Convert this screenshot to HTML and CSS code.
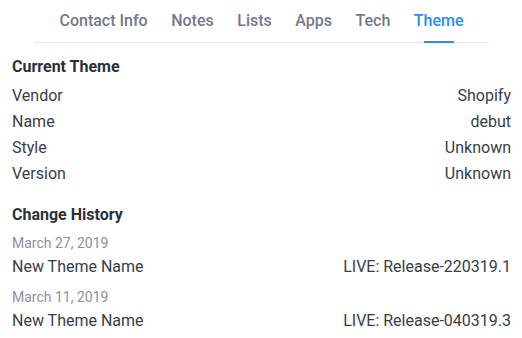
FILE: index.html
```html
<!DOCTYPE html>
<html lang="en">
<head>
  <meta charset="UTF-8">
  <meta name="viewport" content="width=device-width, initial-scale=1.0">
  <title>Store Theme</title>
  <link rel="stylesheet" href="styles.css">
</head>
<body>

  <div class="tabs">
    <a href="#" class="tab">Contact Info</a>
    <a href="#" class="tab">Notes</a>
    <a href="#" class="tab">Lists</a>
    <a href="#" class="tab">Apps</a>
    <a href="#" class="tab">Tech</a>
    <a href="#" class="tab active">Theme</a>
  </div>

  <!-- Current theme -->
  <div class="section">
    <h3>Current Theme</h3>
    <div class="row"><span>Vendor</span><span>Shopify</span></div>
    <div class="row"><span>Name</span><span>debut</span></div>
    <div class="row"><span>Style</span><span>Unknown</span></div>
    <div class="row"><span>Version</span><span>Unknown</span></div>
  </div>

  <!-- History -->
  <div class="section history">
    <h3>Change History</h3>
    <div class="entry">
      <div class="date">March 27, 2019</div>
      <div class="row"><span>New Theme Name</span><span>LIVE: Release-220319.1</span></div>
    </div>
    <div class="entry">
      <div class="date">March 11, 2019</div>
      <div class="row"><span>New Theme Name</span><span>LIVE: Release-040319.3</span></div>
    </div>
  </div>

</body>
</html>
```

FILE: styles.css
```css
body {
  font-family: Roboto, "Liberation Sans", Arial, sans-serif;
  background-color: #fff;
  color: #373e48;
  margin: 0;
  padding: 0;
}

.tabs {
  display: flex;
  justify-content: center;
  gap: 23.5px;
  margin: 0 33px 0 34px;
  border-bottom: 1px solid #e6e8eb;
}

.tab {
  position: relative;
  display: block;
  padding: 11px 0;
  font-size: 16px;
  font-weight: 500;
  line-height: 20px;
  color: #727a87;
  text-decoration: none;
}

.tab.active {
  color: #2b8ef0;
}

.tab.active::after {
  content: "";
  position: absolute;
  left: 50%;
  bottom: -1px;
  width: 30px;
  height: 2px;
  margin-left: -15px;
  background-color: #2b8ef0;
}

.section {
  padding: 0 11px 0 12px;
}

.section h3 {
  margin: 14px 0 6px;
  font-size: 16px;
  line-height: 20px;
  font-weight: bold;
  color: #2a313a;
}

.history h3 {
  margin: 18px 0 7px;
}

.row {
  display: flex;
  justify-content: space-between;
  font-size: 16px;
  line-height: 26px;
}

.entry {
  margin-bottom: 6px;
}

.date {
  font-size: 14px;
  line-height: 22px;
  color: #8a919b;
}
```
